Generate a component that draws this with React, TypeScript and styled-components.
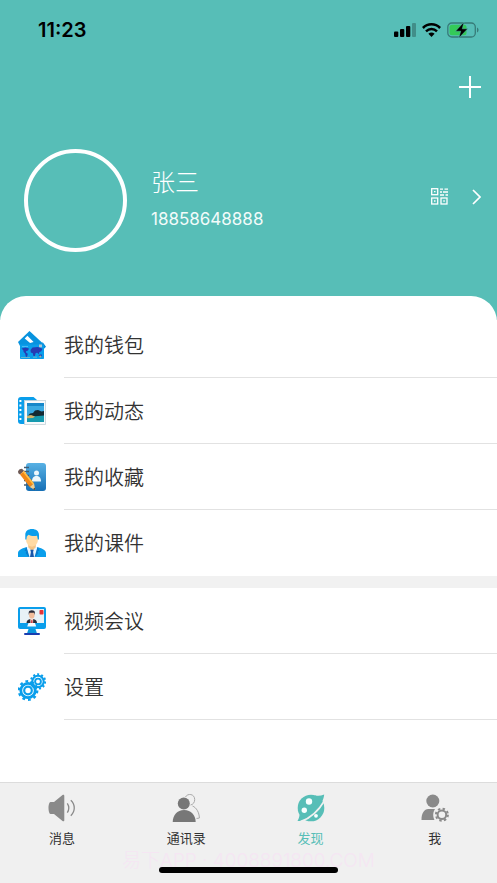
import React from "react";
import styled, { createGlobalStyle } from "styled-components";

const teal = "#57beb7";

const GlobalStyle = createGlobalStyle`
  * { box-sizing: border-box; }
  body {
    margin: 0;
    background: #fff;
    color: #333;
    font-family: Inter, "Noto Sans CJK SC", sans-serif;
  }
  svg { display: block; flex: none; }
  button { border: 0; padding: 0; background: none; color: inherit; font: inherit; cursor: pointer; }
  a { color: inherit; text-decoration: none; }
`;

const Screen = styled.div`
  display: flex;
  flex-direction: column;
  min-height: 100vh;
`;

const Header = styled.header`
  background: ${teal};
  color: #fff;
  padding-bottom: 68px;
`;

const StatusBar = styled.div`
  display: flex;
  align-items: center;
  justify-content: space-between;
  height: 60px;
  padding: 0 18px 0 38px;
  color: #000;
`;

const Time = styled.time`
  font-size: 20px;
  font-weight: 600;
`;

const StatusIcons = styled.div`
  display: flex;
  align-items: center;
  gap: 6px;
`;

const Actions = styled.div`
  display: flex;
  justify-content: flex-end;
  padding: 16px 16px 0;
`;

const Profile = styled.section`
  display: flex;
  align-items: center;
  padding: 51px 16px 0 24px;
`;

const Avatar = styled.div`
  flex: none;
  width: 103px;
  height: 103px;
  border: 4px solid #fff;
  border-radius: 50%;
`;

const Identity = styled.div`
  flex: 1;
  padding: 0 0 4px 24px;
`;

const Name = styled.h1`
  margin: 0;
  font-size: 24px;
  font-weight: 300;
  line-height: 40px;
`;

const Phone = styled.p`
  margin: 0;
  font-size: 17px;
  line-height: 32px;
  color: #f2fbfa;
`;

const ProfileLinks = styled.div`
  display: flex;
  align-items: center;
  gap: 24px;
  padding-bottom: 8px;
`;

const Sheet = styled.main`
  flex: 1;
  margin-top: -24px;
  padding-top: 16px;
  border-radius: 26px 26px 0 0;
  background: #fff;
`;

const Menu = styled.nav`
  & + & { border-top: 12px solid #f1f1f1; }
`;

const MenuRow = styled.a`
  display: flex;
  align-items: center;
  height: 66px;
  padding-left: 18px;
  gap: 18px;
`;

const MenuLabel = styled.span<{ $line: boolean }>`
  flex: 1;
  padding-top: 3px;
  font-size: 20px;
  font-weight: 350;
  line-height: 62px;
  border-bottom: 1px solid ${(p) => (p.$line ? "#e2e2e2" : "transparent")};
`;

const Footer = styled.footer`
  position: relative;
  border-top: 1px solid #dcdcdc;
  background: #f0f0f0;
  padding: 11px 0 10px;
`;

const Tabs = styled.nav`
  display: grid;
  grid-template-columns: repeat(4, 1fr);
`;

const Tab = styled.button<{ $active: boolean }>`
  display: flex;
  flex-direction: column;
  align-items: center;
  gap: 6px;
  font-size: 13px;
  line-height: 20px;
  color: ${(p) => (p.$active ? teal : "#333")};
`;

const Watermark = styled.div`
  position: absolute;
  inset: auto 0 10px;
  font-size: 19px;
  font-weight: 300;
  line-height: 24px;
  text-align: center;
  white-space: nowrap;
  color: #f5e6f3;
`;

const HomeIndicator = styled.div`
  position: relative;
  width: 36%;
  height: 6px;
  margin: 19px auto 0;
  border-radius: 3px;
  background: #000;
`;

const blue = "#0a9eeb";

const SignalIcon = () => (
  <svg width="22" height="14" viewBox="0 0 22 14" aria-hidden="true">
    <rect x="0" y="8.5" width="4.3" height="5.5" rx="1" />
    <rect x="6" y="6" width="4.3" height="8" rx="1" />
    <rect x="12" y="3" width="4.3" height="11" rx="1" />
    <rect x="18" y="0" width="4" height="14" rx="1" opacity=".25" />
  </svg>
);

const WifiIcon = () => (
  <svg width="19" height="14" viewBox="0 0 19 14" aria-hidden="true">
    <g fill="none" stroke="#000" strokeWidth="2.5">
      <path d="M.9 5C5.8.1 13.2.1 18.1 5" />
      <path d="M4 8.3c3.1-3 7.9-3 11 0" />
    </g>
    <path d="M6.4 10.7c1.8-1.6 4.4-1.6 6.2 0L9.5 14z" />
  </svg>
);

const BatteryIcon = () => (
  <svg width="32" height="16" viewBox="0 0 32 16" aria-hidden="true">
    <rect x=".8" y="1" width="27.5" height="14" rx="4" fill="none" stroke="#377b78" strokeWidth="1.3" />
    <rect x="2.5" y="2.7" width="17" height="10.6" rx="2.5" fill="#34ca58" />
    <path d="M30 5.5c2 .7 2 4.3 0 5z" fill="#377b78" />
    <path d="M17 0L8.5 9.2h5.2L11.8 16 20.7 6.8h-5.4z" stroke="#57beb7" strokeWidth=".5" />
  </svg>
);

const PlusIcon = () => (
  <svg width="22" height="22" viewBox="0 0 22 22" stroke="#fff" strokeWidth="2">
    <path d="M11 0v22M0 11h22" />
  </svg>
);

const QrIcon = () => (
  <svg width="17" height="17" viewBox="0 0 17 17" fill="none" stroke="#fff" strokeWidth="1.3">
    <rect x=".7" y=".7" width="6" height="6" />
    <rect x=".7" y="10" width="6" height="6" />
    <rect x="10" y="10" width="6" height="6" />
    <path d="M3 3.7h1.5M3 13h1.5M12.3 13h1.5M9 1.2h3M13.5 1.2H17M9 4h2M12 4h5M9 7h4M14.5 7H17" />
  </svg>
);

const ChevronIcon = () => (
  <svg width="9" height="16" viewBox="0 0 9 16" fill="none" stroke="#fff" strokeWidth="1.7">
    <path d="M1 1l7 7-7 7" />
  </svg>
);

const WalletIcon = () => (
  <svg width="28" height="28" viewBox="0 0 28 28" aria-hidden="true">
    <path d="M0 11L11.5 0 25 12.5V15H2z" fill="#0793df" />
    <path d="M6.7 7.4l2.7-2.6 6.2 6.1-3.5 1z" fill="#fff" />
    <path d="M24.4 10.8l3.6 5-3 3z" fill="#0588d6" />
    <rect x="2" y="13.5" width="24" height="14.5" rx=".7" fill={blue} />
    <path d="M21 13.5h3v2.8h-3z" fill="#b6c6cf" />
    <path d="M4 15h6v1H4z" fill="#4bbbf4" />
    <path d="M3.5 17.5l4-1 3.5 1-1 2-2 .8.2 1.5 1.6 1-.8 3.2-1.2-.5-.7-3-1.5-1.6-.3-1.7zM12.5 19l2-2.4 5.5-.5 4.5 1.6-1.2 2.5-2 1-.5 2-1.5-1.4-1.6.2-.8 3-1.4.2-.7-3-2-.8zM20.5 24l3-.8.5 2-2.6.3z" fill="#263bb3" />
    <path d="M3 26h9v.8H3zM15 25.8h4v.7h-4z" fill="#82bfc5" />
    <circle cx="22.3" cy="25.5" r="1" fill="#a8b394" />
  </svg>
);

const MomentsIcon = () => (
  <svg width="28" height="28" viewBox="0 0 28 28" aria-hidden="true">
    <path d="M3 0h12.5L19 3v24H3a3 3 0 01-3-3V3a3 3 0 013-3z" fill={blue} />
    <g fill="#fff">
      <rect x="1.4" y="3" width="2" height="2" /><rect x="1.4" y="7.5" width="2" height="2" />
      <rect x="1.4" y="12" width="2" height="2" /><rect x="1.4" y="16.5" width="2" height="2" />
      <rect x="1.4" y="21" width="2" height="2" />
    </g>
    <rect x="6.5" y="3.5" width="21" height="24" fill="#f8fafc" stroke="#c4d1d8" strokeWidth=".8" />
    <rect x="9" y="6" width="17" height="19" fill="#3aaae2" />
    <path d="M9 6h17v3H9z" fill="#1687c9" />
    <path d="M9 19c5-1.4 10-1.5 17-.8V25H9z" fill="#169aaf" />
    <path d="M10 18.5l2-2 3-.5 2-2.5 3-.5 3.5 1.5L26 14v4.5l-9 .8z" fill="#142932" />
    <path d="M9 19l4-.9 4 1.3-2 1.6-6 .2z" fill="#d1b36a" />
  </svg>
);

const FavoritesIcon = () => (
  <svg width="28" height="28" viewBox="0 0 28 28" aria-hidden="true">
    <defs>
      <linearGradient id="book" x1="0" y1="0" x2="0" y2="1">
        <stop offset="0" stopColor="#58b1e4" /><stop offset="1" stopColor="#166fb5" />
      </linearGradient>
    </defs>
    <rect x="8" y="0" width="20" height="28" rx="3" fill="url(#book)" />
    <path d="M6 4.5h5M6 8.5h5M6 12.5h5M6 17.5h5M6 22h5" stroke="#415d74" strokeWidth="1.4" />
    <circle cx="18.5" cy="10" r="2.5" fill="#edf7fc" />
    <path d="M14 18.5c0-4 2-5.5 4.5-5.5s4.5 1.5 4.5 5.5z" fill="#edf7fc" />
    <path d="M0 8.3l1.6-2 2.4-.5 2 2-4 3.8-1.7-1.4z" fill="#6d5955" />
    <path d="M2 11.5L6 8l10 12.5-4.2 3.6z" fill="#f28716" />
    <path d="M4.8 9l1.2-1 10 12.5-1.3 1.1z" fill="#ffc049" />
    <path d="M11.8 24l4.2-3.5 1.3 6.7z" fill="#f5cf8e" />
    <path d="M15 26l1.8-1.2.5 2.4z" fill="#4a4037" />
  </svg>
);

const CoursewareIcon = () => (
  <svg width="28" height="28" viewBox="0 0 28 28" aria-hidden="true">
    <path d="M0 28v-3.5C0 21 3 20 8.5 18h11c5.5 2 8.5 3 8.5 6.5V28z" fill={blue} />
    <path d="M8.5 18h11l-2 10h-7z" fill="#e9f5ff" />
    <path d="M10.2 15h7.6v3.2L14 22l-3.8-3.8z" fill="#f3c486" />
    <path d="M12.3 20.8h3.4l-.6 2.2.9 5h-4l.9-5z" fill="#1756ab" />
    <path d="M8.5 18l-2 3.5 2 1L7.7 24l2.8 4h1zM19.5 18l2 3.5-2 1 .8 1.5-2.8 4h-1z" fill="#087dce" />
    <ellipse cx="14" cy="10.5" rx="6" ry="7.2" fill="#ffdaa3" />
    <path d="M7.3 10.5V6C7.3 2 10 0 14 0s7 2 7 6v4.5h-1.2L19 6.8c-3 .6-6.5.3-8.5-1L8.8 7.4l-.4 3.1z" fill={blue} />
  </svg>
);

const MeetingIcon = () => (
  <svg width="28" height="28" viewBox="0 0 28 28" aria-hidden="true">
    <rect width="28" height="22" rx="2" fill={blue} />
    <path d="M2 2h24v14H2z" fill="#e8f2f7" />
    <path d="M10.5 22h7l1.5 4.5H9z" fill="#0a96dd" />
    <rect x="6" y="26" width="16" height="2" rx="1" fill="#1a3daf" />
    <path d="M8.500 16c0-2.500 1.500-3.400 4-4h2.500c2.500.6 4 1.500 4 4z" fill="#2b2b38" />
    <path d="M12.2 11.5h3l-.1 4.5h-2.7z" fill="#f4d5c9" />
    <path d="M13.3 13h1l.4 3h-1.8z" fill="#d63e46" />
    <ellipse cx="13.8" cy="8" rx="2.8" ry="3.6" fill="#f1bd9b" />
    <path d="M10.7 8V5.5c0-3 6.2-3.2 6.2 0V8l-.8-2.3h-4.6z" fill="#2b2b38" />
    <path d="M10.5 16h6.5l1.2 3.5h-9z" fill="#f6fbff" />
    <rect x="21.5" y="3" width="4" height="4.5" rx=".8" fill="#e53538" />
  </svg>
);

const SettingsIcon = () => (
  <svg width="28" height="28" viewBox="0 0 28 28" fill="none" stroke={blue} aria-hidden="true">
    <circle cx="10" cy="17.5" r="7.2" strokeWidth="2.8" />
    <circle cx="10" cy="17.5" r="9.2" strokeWidth="2.4" strokeDasharray="2.8 2.98" />
    <circle cx="10" cy="17.5" r="3.8" strokeWidth="2.2" />
    <circle cx="20" cy="8.5" r="5.7" strokeWidth="2.1" />
    <circle cx="20" cy="8.5" r="7.2" strokeWidth="2" strokeDasharray="2 2.11" />
    <circle cx="20" cy="8.5" r="2.9" strokeWidth="1.9" />
  </svg>
);

const SpeakerIcon = () => (
  <svg width="28" height="28" viewBox="0 0 28 28" aria-hidden="true">
    <path d="M2.5 8H6l8.5-7c.9-.7 1.8-.3 1.8.8v24.4c0 1.1-.9 1.5-1.8.8L6 20H2.5C1.2 20 .5 16.5.5 14s.7-6 2-6z" fill="#8a8a8a" />
    <path d="M19.3 9.3c1.8 2.8 1.8 6.6 0 9.4M22.8 6.3c4.6 4.4 4.6 11 0 15.4" fill="none" stroke="#8a8a8a" strokeWidth="1.3" />
  </svg>
);

const ContactsIcon = () => (
  <svg width="28" height="28" viewBox="0 0 28 28" aria-hidden="true">
    <path d="M13.5 3c2-4 9.2-3.3 9.2 2.5 0 3-1.7 5.1-4.2 5.5M20.5 12c4 1.6 6.7 6.5 6.9 12-.8.3-1.7.4-2.9.4" fill="none" stroke="#a9a9a9" />
    <circle cx="11.8" cy="9.5" r="6" fill="#777" />
    <path d="M.7 28c.2-7 4.3-12 11.4-12s11.4 5 11.6 12z" fill="#777" />
  </svg>
);

const DiscoverIcon = () => (
  <svg width="28" height="28" viewBox="0 0 28 28" aria-hidden="true">
    <circle cx="14" cy="14" r="13.3" fill={teal} />
    <path d="M2.6 20.5C2.4 23 1.6 25 .5 27c3.200.1 6-.6 8.500-2zM17.500 1.200c3.200 1 6.300.6 9.700-.7-.3 3.200-1.200 5.500-2.700 8z" fill={teal} />
    <path d="M3.5 27.6C13 24.5 21.500 17 27.600 6.500" fill="none" stroke="#f0f0f0" strokeWidth="1.7" />
    <circle cx="12" cy="7.500" r="3.200" fill="#f7ffff" />
    <circle cx="7.300" cy="16.200" r="2.700" fill="#f7ffff" />
    <circle cx="19" cy="21.800" r="1.900" fill="#f7ffff" />
  </svg>
);

const MeIcon = () => (
  <svg width="28" height="28" viewBox="0 0 28 28" aria-hidden="true">
    <circle cx="11.8" cy="7" r="6.5" fill="#8a8a8a" />
    <path d="M.5 26c0-7 2.8-11 6.8-11H14c-2 3-2.5 7-.5 11z" fill="#8a8a8a" />
    <circle cx="20.9" cy="20.7" r="4.3" fill="none" stroke="#8a8a8a" strokeWidth="2" />
    <circle cx="20.9" cy="20.7" r="6" fill="none" stroke="#8a8a8a" strokeWidth="2" strokeDasharray="2.4 2.31" />
  </svg>
);

const menus = [
  [
    { label: "我的钱包", Icon: WalletIcon },
    { label: "我的动态", Icon: MomentsIcon },
    { label: "我的收藏", Icon: FavoritesIcon },
    { label: "我的课件", Icon: CoursewareIcon },
  ],
  [
    { label: "视频会议", Icon: MeetingIcon },
    { label: "设置", Icon: SettingsIcon },
  ],
];

const tabs = [
  { label: "消息", Icon: SpeakerIcon },
  { label: "通讯录", Icon: ContactsIcon },
  { label: "发现", Icon: DiscoverIcon },
  { label: "我", Icon: MeIcon },
];

export default function App() {
  return (
    <Screen>
      <GlobalStyle />
      <Header>
        <StatusBar>
          <Time>11:23</Time>
          <StatusIcons>
            <SignalIcon />
            <WifiIcon />
            <BatteryIcon />
          </StatusIcons>
        </StatusBar>
        <Actions>
          <button aria-label="添加"><PlusIcon /></button>
        </Actions>
        <Profile>
          <Avatar />
          <Identity>
            <Name>张三</Name>
            <Phone>18858648888</Phone>
          </Identity>
          <ProfileLinks>
            <button aria-label="二维码"><QrIcon /></button>
            <button aria-label="个人资料"><ChevronIcon /></button>
          </ProfileLinks>
        </Profile>
      </Header>
      <Sheet>
        {menus.map((items, group) => (
          <Menu key={group}>
            {items.map(({ label, Icon }, i) => (
              <MenuRow href="#" key={label}>
                <Icon />
                <MenuLabel $line={group > 0 || i < items.length - 1}>{label}</MenuLabel>
              </MenuRow>
            ))}
          </Menu>
        ))}
      </Sheet>
      <Footer>
        <Watermark>易下APP · 4008891800.COM</Watermark>
        <Tabs>
          {tabs.map(({ label, Icon }) => (
            <Tab key={label} $active={label === "发现"}>
              <Icon />
              {label}
            </Tab>
          ))}
        </Tabs>
        <HomeIndicator />
      </Footer>
    </Screen>
  );
}
